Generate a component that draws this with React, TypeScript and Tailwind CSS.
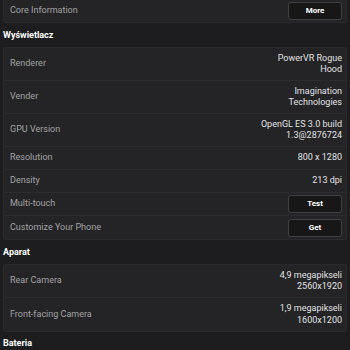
type Row = {
  label: string;
  value?: string[];
  button?: string;
};

function InfoRow({ row, last }: { row: Row; last: boolean }) {
  const tall = row.value && row.value.length > 1;
  return (
    <div
      className={`flex items-center justify-between pl-[6px] pr-[4px] ${tall ? "h-[33px]" : "h-[23px]"} ${
        last ? "" : "border-b border-[#2c2c2e]"
      }`}
    >
      <span className="text-[9px] text-[#a3a3a5]">{row.label}</span>
      {row.value && (
        <div className="text-right text-[9px] leading-[11.5px] text-[#e2e2e4]">
          {row.value.map((v) => (
            <div key={v}>{v}</div>
          ))}
        </div>
      )}
      {row.button && (
        <span className="flex h-[18px] w-[54px] items-center justify-center rounded-[3px] border border-neutral-700 bg-neutral-900 text-[8px] font-bold text-white">
          {row.button}
        </span>
      )}
    </div>
  );
}

function Card({ rows }: { rows: Row[] }) {
  return (
    <div className="mx-[3px] rounded-[2px] border border-[#2a2a2c] bg-[#242426]">
      {rows.map((r, i) => (
        <InfoRow key={r.label} row={r} last={i === rows.length - 1} />
      ))}
    </div>
  );
}

function Header({ title, extra = "" }: { title: string; extra?: string }) {
  return (
    <div className={`flex h-[22px] items-center px-[3px] text-[9px] font-bold text-white ${extra}`}>
      {title}
    </div>
  );
}

export default function App() {
  const display: Row[] = [
    { label: "Renderer", value: ["PowerVR Rogue", "Hood"] },
    { label: "Vender", value: ["Imagination", "Technologies"] },
    { label: "GPU Version", value: ["OpenGL ES 3.0 build", "1.3@2876724"] },
    { label: "Resolution", value: ["800 x 1280"] },
    { label: "Density", value: ["213 dpi"] },
    { label: "Multi-touch", button: "Test" },
    { label: "Customize Your Phone", button: "Get" },
  ];
  const camera: Row[] = [
    { label: "Rear Camera", value: ["4,9 megapikseli", "2560x1920"] },
    { label: "Front-facing Camera", value: ["1,9 megapikseli", "1600x1200"] },
  ];

  return (
    <div
      className="h-[350px] w-[350px] overflow-hidden bg-[#1d1d1f]"
      style={{ fontFamily: "Roboto, 'Liberation Sans', sans-serif" }}
    >
      <div className="-mt-[2px]">
        <Card rows={[{ label: "Core Information", button: "More" }]} />
        <div className="h-[2px]" />
        <Header title="Wyświetlacz" />
        <Card rows={display} />
        <Header title="Aparat" extra="mt-[2px]" />
        <Card rows={camera} />
        <Header title="Bateria" extra="mt-[1px]" />
      </div>
    </div>
  );
}
